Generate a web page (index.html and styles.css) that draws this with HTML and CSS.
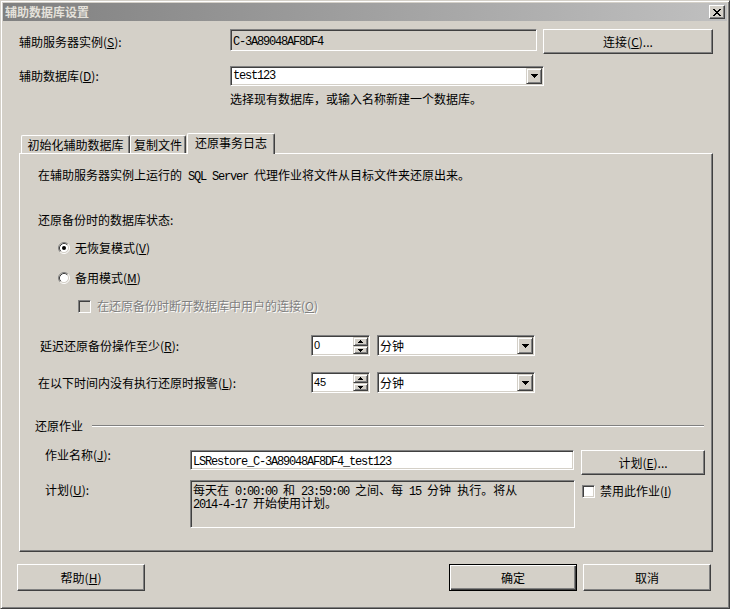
FILE: index.html
```html
<!DOCTYPE html>
<html lang="zh-CN">
<head>
<meta charset="utf-8">
<title>辅助数据库设置</title>
<link rel="stylesheet" href="styles.css">
</head>
<body>
<div class="window">
  <div class="titlebar">
    <span class="title">辅助数据库设置</span>
    <span class="close-btn">
      <svg width="8" height="7" viewBox="0 0 8 7"><path d="M0 0H2V1H3V2H5V1H6V0H8V1H7V2H6V3H5V4H6V5H7V6H8V7H6V6H5V5H3V6H2V7H0V6H1V5H2V4H3V3H2V2H1V1H0Z" fill="#000"/></svg>
    </span>
  </div>

  <div class="client">
    <div class="row row-server">
      <span class="lbl lbl-server">辅助服务器实例(<u>S</u>):</span>
      <div class="edit readonly server-field"><span class="mono">C-3A89048AF8DF4</span></div>
      <button type="button" class="btn connect-btn">连接(<u>C</u>)...</button>
    </div>

    <div class="row row-db">
      <span class="lbl">辅助数据库(<u>D</u>):</span>
      <div class="edit combo db-combo">
        <span class="combo-text mono">test123</span>
        <span class="drop-btn"><svg width="7" height="4" viewBox="0 0 7 4"><path d="M0 0H7V1H6V2H5V3H4V4H3V3H2V2H1V1H0Z" fill="#000"/></svg></span>
      </div>
    </div>

    <div class="hint">选择现有数据库，或输入名称新建一个数据库。</div>

    <div class="tabstrip">
      <div class="tab tab-init">初始化辅助数据库</div>
      <div class="tab tab-copy">复制文件</div>
      <div class="tab tab-active">还原事务日志</div>
    </div>

    <div class="panel">
      <div class="desc">在辅助服务器实例上运行的<span class="mono"> SQL Server </span>代理作业将文件从目标文件夹还原出来。</div>

      <div class="state-label">还原备份时的数据库状态:</div>

      <div class="option option-first">
        <svg class="radio" width="12" height="12" viewBox="0 0 12 12">
          <circle cx="6" cy="6" r="4.5" fill="#fff"/>
          <path d="M2.11 9.89A5.5 5.5 0 0 1 9.89 2.11" fill="none" stroke="#808080"/>
          <path d="M9.89 2.11A5.5 5.5 0 0 1 2.11 9.89" fill="none" stroke="#fff"/>
          <path d="M2.82 9.18A4.5 4.5 0 0 1 9.18 2.82" fill="none" stroke="#404040"/>
          <path d="M9.18 2.82A4.5 4.5 0 0 1 2.82 9.18" fill="none" stroke="#d4d0c8"/>
          <circle cx="6" cy="6" r="2" fill="#000"/>
        </svg>
        <span>无恢复模式(<u>V</u>)</span>
      </div>

      <div class="option option-second">
        <svg class="radio" width="12" height="12" viewBox="0 0 12 12">
          <circle cx="6" cy="6" r="4.5" fill="#fff"/>
          <path d="M2.11 9.89A5.5 5.5 0 0 1 9.89 2.11" fill="none" stroke="#808080"/>
          <path d="M9.89 2.11A5.5 5.5 0 0 1 2.11 9.89" fill="none" stroke="#fff"/>
          <path d="M2.82 9.18A4.5 4.5 0 0 1 9.18 2.82" fill="none" stroke="#404040"/>
          <path d="M9.18 2.82A4.5 4.5 0 0 1 2.82 9.18" fill="none" stroke="#d4d0c8"/>
        </svg>
        <span>备用模式(<u>M</u>)</span>
      </div>

      <div class="option option-sub">
        <span class="check disabled"></span>
        <span class="disabled-text">在还原备份时断开数据库中用户的连接(<u>O</u>)</span>
      </div>

      <div class="timing timing-delay">
        <span class="lbl timing-lbl">延迟还原备份操作至少(<u>R</u>):</span>
        <div class="edit spin">
          <span class="spin-val">0</span>
          <span class="spin-btns">
            <span class="spin-up"><svg width="5" height="3" viewBox="0 0 5 3"><path d="M2 0H3V1H4V2H5V3H0V2H1V1H2Z" fill="#000"/></svg></span>
            <span class="spin-down"><svg width="5" height="3" viewBox="0 0 5 3"><path d="M0 0H5V1H4V2H3V3H2V2H1V1H0Z" fill="#000"/></svg></span>
          </span>
        </div>
        <div class="edit combo unit-combo">
          <span class="combo-text">分钟</span>
          <span class="drop-btn"><svg width="7" height="4" viewBox="0 0 7 4"><path d="M0 0H7V1H6V2H5V3H4V4H3V3H2V2H1V1H0Z" fill="#000"/></svg></span>
        </div>
      </div>

      <div class="timing timing-alert">
        <span class="lbl timing-lbl">在以下时间内没有执行还原时报警(<u>L</u>):</span>
        <div class="edit spin">
          <span class="spin-val">45</span>
          <span class="spin-btns">
            <span class="spin-up"><svg width="5" height="3" viewBox="0 0 5 3"><path d="M2 0H3V1H4V2H5V3H0V2H1V1H2Z" fill="#000"/></svg></span>
            <span class="spin-down"><svg width="5" height="3" viewBox="0 0 5 3"><path d="M0 0H5V1H4V2H3V3H2V2H1V1H0Z" fill="#000"/></svg></span>
          </span>
        </div>
        <div class="edit combo unit-combo">
          <span class="combo-text">分钟</span>
          <span class="drop-btn"><svg width="7" height="4" viewBox="0 0 7 4"><path d="M0 0H7V1H6V2H5V3H4V4H3V3H2V2H1V1H0Z" fill="#000"/></svg></span>
        </div>
      </div>

      <div class="group-head">
        <span>还原作业</span>
        <span class="etched"></span>
      </div>

      <div class="job-row">
        <span class="lbl job-lbl">作业名称(<u>J</u>):</span>
        <div class="edit job-name"><span class="mono">LSRestore_C-3A89048AF8DF4_test123</span></div>
        <button type="button" class="btn schedule-btn">计划(<u>E</u>)...</button>
      </div>

      <div class="plan-row">
        <span class="lbl plan-lbl">计划(<u>U</u>):</span>
        <div class="edit readonly plan-text">
          <div class="plan-line">每天在<span class="mono"> 0:00:00 </span>和<span class="mono"> 23:59:00 </span>之间、每<span class="mono"> 15 </span>分钟<span class="mono"> </span>执行。将从</div>
          <div class="plan-line"><span class="mono">2014-4-17 </span>开始使用计划。</div>
        </div>
        <span class="check plan-check"></span>
        <span class="plan-check-lbl">禁用此作业(<u>I</u>)</span>
      </div>
    </div>

    <div class="footer">
      <button type="button" class="btn foot-btn">帮助(<u>H</u>)</button>
      <div class="foot-right">
        <button type="button" class="btn btn-default foot-btn">确定</button>
        <button type="button" class="btn foot-btn">取消</button>
      </div>
    </div>
  </div>
</div>
</body>
</html>
```

FILE: styles.css
```css
/* Classic 3D dialog: face #d4d0c8, shadow #808080, dark shadow #404040, highlight #fff */
body {
  margin: 0;
  background: #d4d0c8;
  color: #000;
  font-family: "Noto Sans CJK SC", "Noto Sans", sans-serif;
  font-size: 12px;
  line-height: 14px;
}

u {
  text-decoration: underline;
  text-underline-offset: 1px;
}

.window {
  width: 730px;
  height: 609px;
  box-sizing: border-box;
  border: 1px solid;
  border-color: #d4d0c8 #404040 #404040 #d4d0c8;
  box-shadow: inset 1px 1px #fff, inset -1px -1px #808080;
  padding: 2px;
  background: #d4d0c8;
  display: flex;
  flex-direction: column;
}

/* ---- title bar (inactive caption) ---- */
.titlebar {
  height: 18px;
  flex: none;
  display: flex;
  align-items: center;
  justify-content: space-between;
  padding: 0 2px 0 2px;
  background: linear-gradient(to right, #808080, #c0c0c0);
}

.title {
  color: #e4e1da;
  font-weight: bold;
  font-size: 12px;
  line-height: 14px;
}

.close-btn {
  width: 16px;
  height: 14px;
  box-sizing: border-box;
  border: 1px solid;
  border-color: #fff #404040 #404040 #fff;
  box-shadow: inset -1px -1px #808080;
  background: #d4d0c8;
  display: flex;
  align-items: center;
  justify-content: center;
}

/* ---- shared controls ---- */
.mono {
  font-family: "Liberation Mono", monospace;
  letter-spacing: -1.2px;
}

.edit {
  box-sizing: border-box;
  border: 1px solid;
  border-color: #808080 #fff #fff #808080;
  box-shadow: inset 1px 1px #404040, inset -1px -1px #d4d0c8;
  background: #fff;
  padding: 1px;
}

.edit.readonly {
  background: #d4d0c8;
}

.btn {
  box-sizing: border-box;
  margin: 0;
  padding: 0;
  border: 1px solid;
  border-color: #fff #404040 #404040 #fff;
  box-shadow: inset -1px -1px #808080;
  background: #d4d0c8;
  color: #000;
  font: inherit;
  display: flex;
  align-items: center;
  justify-content: center;
}

.btn-default {
  border: 1px solid #000;
  box-shadow: inset 1px 1px #fff, inset -1px -1px #404040, inset -2px -2px #808080;
}

.combo {
  display: flex;
  align-items: center;
}

.combo-text {
  flex: 1;
  padding-left: 1px;
  white-space: nowrap;
}

.drop-btn {
  width: 16px;
  height: 100%;
  box-sizing: border-box;
  border: 1px solid;
  border-color: #d4d0c8 #404040 #404040 #d4d0c8;
  box-shadow: inset 1px 1px #fff, inset -1px -1px #808080;
  background: #d4d0c8;
  display: flex;
  align-items: center;
  justify-content: center;
}

.check {
  width: 13px;
  height: 13px;
  flex: none;
  box-sizing: border-box;
  border: 1px solid;
  border-color: #808080 #fff #fff #808080;
  box-shadow: inset 1px 1px #404040, inset -1px -1px #d4d0c8;
  background: #fff;
}

.check.disabled {
  background: #d4d0c8;
}

.disabled-text {
  color: #808080;
  text-shadow: 1px 1px 0 #fff;
}

.lbl {
  flex: none;
  white-space: nowrap;
}

/* ---- client area ---- */
.client {
  flex: 1;
  display: flex;
  flex-direction: column;
  padding: 8px 14px 0 16px;
}

.row {
  display: flex;
}

.row-server {
  height: 25px;
  align-items: flex-start;
}

.lbl-server {
  width: 211px;
  padding-top: 6px;
}

.server-field {
  width: 307px;
  height: 22px;
  line-height: 18px;
  padding-left: 2px;
}

.connect-btn {
  width: 170px;
  height: 25px;
  margin-left: 6px;
}

.row-db {
  margin-top: 12px;
  height: 20px;
  align-items: center;
}

.row-db .lbl {
  width: 211px;
}

.db-combo {
  width: 314px;
  height: 20px;
}

.hint {
  margin-top: 6px;
  margin-left: 211px;
}

/* ---- tabs ---- */
.tabstrip {
  display: flex;
  align-items: flex-start;
  height: 21px;
  margin: 27px 0 -1px 2px;
}

.tab {
  box-sizing: border-box;
  height: 18px;
  margin-top: 2px;
  padding-top: 2px;
  text-align: center;
  border-top: 1px solid #fff;
  border-left: 1px solid #fff;
  border-right: 1px solid #404040;
  box-shadow: inset -1px 0 #808080;
  border-radius: 2px 2px 0 0;
  white-space: nowrap;
}

.tab-init {
  width: 109px;
}

.tab-copy {
  width: 56px;
}

.tab-active {
  position: relative;
  z-index: 1;
  width: 88px;
  height: 21px;
  margin-top: 0;
  margin-left: 1px;
  padding-top: 2px;
  background: #d4d0c8;
}

.panel {
  box-sizing: border-box;
  height: 399px;
  border: 1px solid;
  border-color: #fff #404040 #404040 #fff;
  box-shadow: inset -1px -1px #808080;
  display: flex;
  flex-direction: column;
}

.desc {
  margin-top: 14px;
  padding-left: 18px;
  white-space: nowrap;
}

.state-label {
  margin-top: 29px;
  padding-left: 18px;
}

.option {
  display: flex;
  align-items: center;
  height: 14px;
}

.option-first {
  margin-top: 14px;
  padding-left: 38px;
}

.option-second {
  margin-top: 16px;
  padding-left: 38px;
}

.radio {
  flex: none;
  margin-right: 5px;
}

.option-sub {
  margin-top: 14px;
  padding-left: 58px;
}

.option-sub .check {
  margin-right: 6px;
}

/* ---- delay / alert rows ---- */
.timing {
  display: flex;
  align-items: center;
  height: 21px;
}

.timing-delay {
  margin-top: 22px;
  padding-left: 20px;
}

.timing-delay .timing-lbl {
  width: 271px;
}

.timing-alert {
  margin-top: 16px;
  padding-left: 18px;
}

.timing-alert .timing-lbl {
  width: 273px;
}

.spin {
  width: 59px;
  height: 21px;
  display: flex;
}

.spin-val {
  flex: 1;
  font-family: "Liberation Sans", sans-serif;
  font-size: 11px;
  line-height: 17px;
  padding-left: 1px;
}

.spin-btns {
  width: 15px;
  display: flex;
  flex-direction: column;
}

.spin-up,
.spin-down {
  box-sizing: border-box;
  border: 1px solid;
  border-color: #d4d0c8 #404040 #404040 #d4d0c8;
  box-shadow: inset 1px 1px #fff, inset -1px -1px #808080;
  background: #d4d0c8;
  display: flex;
  align-items: center;
  justify-content: center;
}

.spin-up {
  height: 9px;
}

.spin-down {
  height: 8px;
}

.unit-combo {
  width: 158px;
  height: 21px;
  margin-left: 7px;
}

/* ---- restore job group ---- */
.group-head {
  display: flex;
  align-items: center;
  height: 14px;
  margin-top: 26px;
  padding-left: 15px;
  padding-right: 8px;
}

.etched {
  flex: 1;
  height: 0;
  margin-left: 9px;
  border-top: 1px solid #808080;
  border-bottom: 1px solid #fff;
}

.job-row {
  display: flex;
  align-items: flex-start;
  height: 25px;
  margin-top: 17px;
  padding-left: 25px;
}

.job-lbl {
  width: 145px;
  margin-top: -2px;
}

.job-name {
  width: 384px;
  height: 20px;
  line-height: 16px;
  padding-left: 2px;
  white-space: nowrap;
}

.schedule-btn {
  width: 124px;
  height: 25px;
  margin-left: 7px;
}

.plan-row {
  display: flex;
  align-items: flex-start;
  margin-top: 5px;
  padding-left: 25px;
}

.plan-lbl {
  width: 145px;
  margin-top: 3px;
}

.plan-text {
  width: 385px;
  height: 48px;
  padding: 2px 1px 0 2px;
  white-space: nowrap;
}

.plan-line {
  height: 13px;
  line-height: 13px;
}

.plan-check {
  margin: 5px 0 0 7px;
}

.plan-check-lbl {
  margin: 4px 0 0 5px;
  white-space: nowrap;
}

/* ---- dialog buttons ---- */
.footer {
  display: flex;
  justify-content: space-between;
  height: 27px;
  margin: 12px 2px 0 -2px;
}

.foot-right {
  display: flex;
  gap: 6px;
}

.foot-btn {
  width: 128px;
  height: 27px;
}
```
